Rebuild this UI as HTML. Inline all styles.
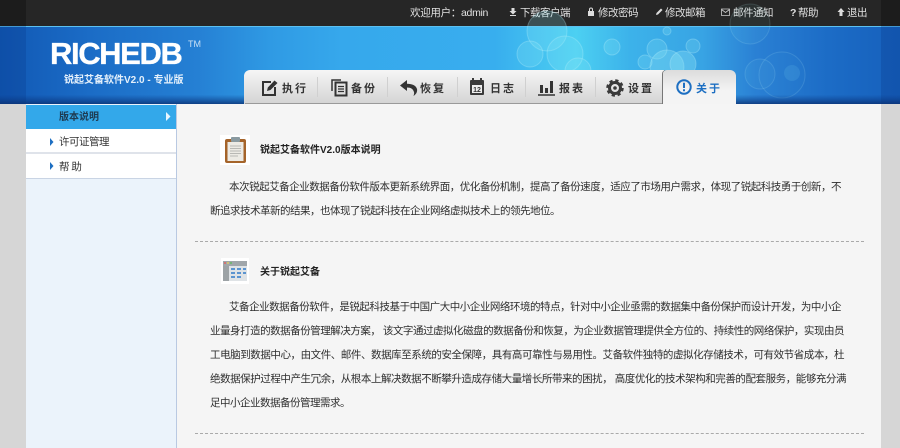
<!DOCTYPE html>
<html lang="zh"><head><meta charset="utf-8"><title>RICHEDB</title>
<style>
html,body{margin:0;padding:0;width:900px;height:448px;overflow:hidden;background:#d6d6d6}
body{position:relative;font-family:"Liberation Sans","Noto Sans CJK SC",sans-serif;font-size:10.500px;color:#333}
.a{position:absolute;white-space:nowrap}
.t{line-height:14px;height:14px;color:#e0e0e0;top:6px;letter-spacing:-.5px}
.l{line-height:14px;height:14px;font-weight:bold;font-size:11px;color:#333;letter-spacing:2px;top:81.500px}
.p{line-height:14px;height:14px;color:#2e2e2e;left:210px;width:631px;text-align:justify;text-align-last:justify;letter-spacing:-.5px}
.i{left:229px;width:612px}
.sep{position:absolute;top:77px;width:1px;height:20px;background:#d0d0d0}
svg{position:absolute;overflow:visible}
</style></head><body>
<div class="a" style="left:0;top:0;width:900px;height:26px;background:#262626"></div>
<div class="a" style="left:0;top:0;width:26px;height:26px;background:#1c1c1c"></div>
<div class="a" style="left:881px;top:0;width:19px;height:26px;background:#1c1c1c"></div>
<div class="a t" style="left:410px;letter-spacing:-.3px">欢迎用户：admin</div>
<svg style="left:509px;top:7px" width="10" height="10"><path d="M2.500 1h3v3h2L4 7.500.5 4h2zM1 8h6v1H1z" fill="#ddd"/></svg>
<div class="a t" style="left:520px">下载客户端</div>
<svg style="left:587px;top:7px" width="10" height="10"><path d="M1 4h6v5H1z" fill="#ddd"/><path d="M2.500 4V2.500a1.500 1.500 0 013 0V4" fill="none" stroke="#ddd"/></svg>
<div class="a t" style="left:598px">修改密码</div>
<svg style="left:655px;top:7px" width="10" height="10"><path d="M1 8l.5-2L6 1.500 7.500 3 3 7.500z" fill="#ddd"/></svg>
<div class="a t" style="left:665px">修改邮箱</div>
<svg style="left:721px;top:7px" width="10" height="10"><path d="M.5 2h8v6.500h-8zM.5 2.500l4 3 4-3" fill="none" stroke="#ccc" stroke-width=".8"/></svg>
<div class="a t" style="left:733px">邮件通知</div>
<div class="a t" style="left:790px;font-weight:bold">?</div>
<div class="a t" style="left:798px">帮助</div>
<svg style="left:837px;top:7px" width="10" height="10"><path d="M4 1l3.500 4H5.500v4h-3V5H.5z" fill="#ddd"/></svg>
<div class="a t" style="left:847px">退出</div>

<svg style="left:0;top:26px" width="900" height="78">
<defs>
<linearGradient id="bg" x1="0" x2="1" y1="0" y2="0">
<stop offset="0" stop-color="#1158b4"/><stop offset=".1" stop-color="#1b6cc6"/><stop offset=".22" stop-color="#2580d4"/><stop offset=".3" stop-color="#2f9ae4"/><stop offset=".38" stop-color="#36a8ec"/><stop offset=".55" stop-color="#38aeee"/><stop offset=".64" stop-color="#4cd0f2"/><stop offset=".7" stop-color="#3cb2ea"/><stop offset=".78" stop-color="#38a4e4"/><stop offset=".84" stop-color="#2a80d4"/><stop offset=".92" stop-color="#1c6cc6"/><stop offset="1" stop-color="#1660bc"/>
</linearGradient>
<linearGradient id="sh" x1="0" x2="0" y1="0" y2="1"><stop offset=".88" stop-color="#0a3a88" stop-opacity="0"/><stop offset="1" stop-color="#0a2f70" stop-opacity=".8"/></linearGradient>
</defs>
<rect width="900" height="78" fill="url(#bg)"/>
<rect width="900" height="1" fill="#5cc0f0"/>
<g fill="#8ee6f6" fill-opacity=".22" stroke="#bdf2fb" stroke-opacity=".3">
<circle cx="547" cy="5" r="20"/><circle cx="565" cy="28" r="18"/><circle cx="530" cy="28" r="13"/><circle cx="578" cy="45" r="13"/>
<circle cx="612" cy="21" r="8"/><circle cx="667" cy="5" r="4"/><circle cx="657" cy="23" r="10"/><circle cx="693" cy="20" r="7"/>
<circle cx="667" cy="41" r="17" fill-opacity=".35"/><circle cx="683" cy="38" r="13" fill-opacity=".35"/><circle cx="645" cy="36" r="7"/>
<circle cx="750" cy="-2" r="20" fill-opacity=".06" stroke-opacity=".15"/><circle cx="760" cy="48" r="15" fill-opacity=".06" stroke-opacity=".15"/><circle cx="782" cy="49" r="23" fill-opacity=".03" stroke-opacity=".15"/><circle cx="792" cy="47" r="8" fill-opacity=".12" stroke="none"/>
</g>
<rect x="0" width="26" height="78" fill="#0a3a90" fill-opacity=".3"/>
<rect x="881" width="19" height="78" fill="#0a3a90" fill-opacity=".3"/>
<rect width="900" height="78" fill="url(#sh)"/>
</svg>

<div class="a" style="left:50px;top:36px;font:bold 31px/36px 'Liberation Sans',sans-serif;letter-spacing:-1.400px;color:#fff;-webkit-text-stroke:.3px #fff">RICHEDB</div>
<div class="a" style="left:188px;top:39px;font:9px/11px 'Liberation Sans',sans-serif;color:#c8e0f4">TM</div>
<div class="a" style="left:64px;top:74px;line-height:14px;font-weight:bold;font-size:10px;color:#e4f0fb">锐起艾备软件V2.0 - 专业版</div>

<div class="a" style="left:244px;top:70px;width:420px;height:34px;border-radius:6px 0 0 0;background:linear-gradient(#f6f6f6,#d4d4d4)"></div>
<div class="a" style="left:245px;top:103px;width:419px;height:1px;background:#9a9a9a"></div>
<div class="a" style="left:663px;top:70px;width:73px;height:35px;border-radius:4px 6px 0 0;background:linear-gradient(#dcdcdc,#f4f4f4 60%);box-shadow:-1px 0 0 #777"></div>
<div class="sep" style="left:317px"></div><div class="sep" style="left:387px"></div><div class="sep" style="left:457px"></div><div class="sep" style="left:525px"></div><div class="sep" style="left:595px"></div>

<svg style="left:261px;top:79px" width="18" height="18"><path d="M10 3H2v13h12V8" fill="none" stroke="#333" stroke-width="2"/><path d="M6 12l.8-3.500L13.500 1.500l3 2.500-7 7z" fill="#333"/></svg>
<div class="a l" style="left:282px">执行</div>
<svg style="left:331px;top:79px" width="18" height="18"><path d="M1 12V1h9" fill="none" stroke="#333" stroke-width="1.500"/><rect x="4.500" y="3.500" width="11" height="13" fill="none" stroke="#333" stroke-width="2"/><path d="M7 7.500h6M7 10h6M7 12.500h6" stroke="#333" stroke-width="1.300"/></svg>
<div class="a l" style="left:351px">备份</div>
<svg style="left:400px;top:79px" width="18" height="18"><path d="M7 1L0 6.500 7 12V8.500c4 0 6 1.500 7 4.500 .3 1.200 0 2.500-.5 4 3-2 4-4.500 3.500-7C16 6.500 12 4.800 7 4.800z" fill="#333"/></svg>
<div class="a l" style="left:420px">恢复</div>
<svg style="left:469px;top:78px" width="18" height="18"><rect x="1" y="2" width="14" height="15" rx="1" fill="#3a3a3a"/><rect x="3" y="7" width="10" height="8" fill="#eee"/><path d="M4 0v4M12 0v4" stroke="#3a3a3a" stroke-width="2"/><text x="8" y="14" font-size="7" font-weight="bold" text-anchor="middle" fill="#333" font-family="Liberation Sans">12</text></svg>
<div class="a l" style="left:490px">日志</div>
<svg style="left:538px;top:79px" width="18" height="18"><path d="M0 16h17" stroke="#333" stroke-width="1.500"/><path d="M2 6h3v8H2zM7 9h3v5H7zM12 2h3v12h-3z" fill="#333"/></svg>
<div class="a l" style="left:559px">报表</div>
<svg style="left:606px;top:79px" width="18" height="18"><circle cx="9" cy="9" r="5.500" fill="none" stroke="#3a3a3a" stroke-width="3"/><circle cx="9" cy="9" r="7" fill="none" stroke="#3a3a3a" stroke-width="3.500" stroke-dasharray="3 2.500"/><circle cx="9" cy="9" r="1.800" fill="#3a3a3a"/></svg>
<div class="a l" style="left:628px">设置</div>
<svg style="left:676px;top:79px" width="16" height="16"><circle cx="8" cy="8" r="6.700" fill="none" stroke="#1d6fc2" stroke-width="2"/><path d="M7 3.800h2v5.200H7zM7 10.200h2v2H7z" fill="#1d6fc2"/></svg>
<div class="a l" style="left:696px;color:#1d6fc2">关于</div>

<div class="a" style="left:26px;top:104px;width:150px;height:344px;background:#ebf3fb;border-right:1px solid #b9c9e2"></div>
<div class="a" style="left:177px;top:104px;width:704px;height:344px;background:#f5f5f5"></div>
<div class="a" style="left:26px;top:105px;width:150px;height:24px;background:#33a8ea"></div>
<div class="a" style="left:26px;top:129px;width:150px;height:25px;background:#fff;border-bottom:2px solid #dfe3ea;box-sizing:border-box"></div>
<div class="a" style="left:26px;top:154px;width:150px;height:25px;background:#fff;border-bottom:1px solid #c9d4e4;box-sizing:border-box"></div>
<div class="a" style="left:59px;top:111px;line-height:14px;font-weight:bold;font-size:10px;color:#1e3a50">版本说明</div>
<svg style="left:166px;top:112px" width="5" height="9"><path d="M0 0l4.500 4.500L0 9z" fill="#e8f6ff"/></svg>
<div class="a" style="left:59px;top:135px;line-height:14px;color:#333;letter-spacing:-.5px">许可证管理</div>
<svg style="left:50px;top:138px" width="4" height="8"><path d="M0 0l3.500 4L0 8z" fill="#1d6fc2"/></svg>
<div class="a" style="left:59px;top:160px;line-height:14px;color:#333;letter-spacing:-.5px">帮&nbsp;助</div>
<svg style="left:50px;top:162px" width="4" height="8"><path d="M0 0l3.500 4L0 8z" fill="#1d6fc2"/></svg>

<svg style="left:220px;top:135px" width="30" height="30"><rect width="30" height="30" fill="#fff"/><rect x="5" y="4" width="21" height="24" rx="2" fill="#a5642a"/><rect x="7.500" y="7" width="16" height="19" fill="#eceae4"/><path d="M10 11h11M10 13.500h11M10 16h11M10 18.500h11M10 21h8" stroke="#b8b8b4"/><rect x="11" y="2" width="9" height="5" rx="1" fill="#8a9aa0"/></svg>
<div class="a" style="left:260px;top:144px;line-height:14px;font-weight:bold;font-size:10px;color:#222">锐起艾备软件V2.0版本说明</div>
<div class="a p i" style="top:180px">本次锐起艾备企业数据备份软件版本更新系统界面，优化备份机制，提高了备份速度，适应了市场用户需求，体现了锐起科技勇于创新，不</div>
<div class="a p" style="top:204px;width:auto;text-align-last:left">断追求技术革新的结果，也体现了锐起科技在企业网络虚拟技术上的领先地位。</div>
<div class="a" style="left:195px;top:241px;width:669px;border-top:1px dashed #aaa"></div>

<svg style="left:221px;top:258px" width="28" height="26"><rect width="28" height="26" fill="#fff"/><rect x="2" y="3" width="24" height="20" fill="#dfe3e6"/><rect x="2" y="3" width="24" height="5" fill="#a0a6aa"/><rect x="2" y="8" width="6" height="15" fill="#9da3a6"/><circle cx="4" cy="5" r="1" fill="#d66"/><circle cx="7" cy="5" r="1" fill="#dc6"/><circle cx="10" cy="5" r="1" fill="#6b6"/><path d="M10 10h4v2h-4zM16 10h4v2h-4zM22 10h3v2h-3zM10 14h4v2h-4zM16 14h4v2h-4zM22 14h3v2h-3zM10 18h4v2h-4zM16 18h4v2h-4z" fill="#5b94d0"/></svg>
<div class="a" style="left:260px;top:266px;line-height:14px;font-weight:bold;font-size:10px;color:#222">关于锐起艾备</div>
<div class="a p i" style="top:300px">艾备企业数据备份软件，是锐起科技基于中国广大中小企业网络环境的特点，针对中小企业亟需的数据集中备份保护而设计开发，为中小企</div>
<div class="a p" style="top:324px;width:634px">业量身打造的数据备份管理解决方案， 该文字通过虚拟化磁盘的数据备份和恢复，为企业数据管理提供全方位的、持续性的网络保护，实现由员</div>
<div class="a p" style="top:348px;width:634px">工电脑到数据中心，由文件、邮件、数据库至系统的安全保障，具有高可靠性与易用性。艾备软件独特的虚拟化存储技术，可有效节省成本，杜</div>
<div class="a p" style="top:372px;width:636px">绝数据保护过程中产生冗余，从根本上解决数据不断攀升造成存储大量增长所带来的困扰， 高度优化的技术架构和完善的配套服务，能够充分满</div>
<div class="a p" style="top:396px;width:auto;text-align-last:left">足中小企业数据备份管理需求。</div>
<div class="a" style="left:195px;top:433px;width:669px;border-top:1px dashed #aaa"></div>
</body></html>
